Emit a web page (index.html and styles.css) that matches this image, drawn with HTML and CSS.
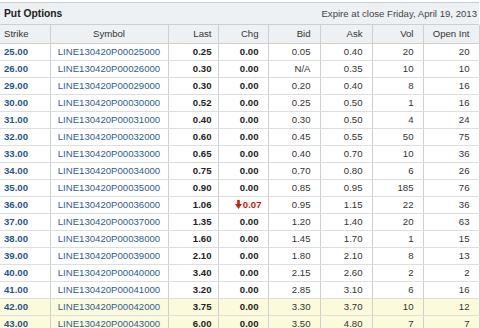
FILE: index.html
```html
<!DOCTYPE html>
<html lang="en">
<head>
    <meta charset="UTF-8">
    <title>Put Options</title>
    <link rel="stylesheet" href="styles.css">
</head>
<body>
    <div class="options">
        <div class="options-head">
            <span class="options-title">Put Options</span>
            <span class="options-expire">Expire at close Friday, April 19, 2013</span>
        </div>
        <table class="chain">
            <colgroup>
                <col class="c-strike"><col class="c-symbol"><col class="c-last"><col class="c-chg">
                <col class="c-bid"><col class="c-ask"><col class="c-vol"><col class="c-oi">
            </colgroup>
            <thead>
                <tr>
                    <th class="left">Strike</th>
                    <th class="center">Symbol</th>
                    <th class="pad-last">Last</th>
                    <th>Chg</th>
                    <th>Bid</th>
                    <th>Ask</th>
                    <th>Vol</th>
                    <th>Open Int</th>
                </tr>
            </thead>
            <tbody id="chain-body"></tbody>
        </table>
    </div>

    <script>
        // strike, last, chg, bid, ask, vol, open int
        const rows = [
            ['25.00', '0.25', '0.00', '0.05', '0.40', '20', '20'],
            ['26.00', '0.30', '0.00', 'N/A', '0.35', '10', '10'],
            ['29.00', '0.30', '0.00', '0.20', '0.40', '8', '16'],
            ['30.00', '0.52', '0.00', '0.25', '0.50', '1', '16'],
            ['31.00', '0.40', '0.00', '0.30', '0.50', '4', '24'],
            ['32.00', '0.60', '0.00', '0.45', '0.55', '50', '75'],
            ['33.00', '0.65', '0.00', '0.40', '0.70', '10', '36'],
            ['34.00', '0.75', '0.00', '0.70', '0.80', '6', '26'],
            ['35.00', '0.90', '0.00', '0.85', '0.95', '185', '76'],
            ['36.00', '1.06', '-0.07', '0.95', '1.15', '22', '36'],
            ['37.00', '1.35', '0.00', '1.20', '1.40', '20', '63'],
            ['38.00', '1.60', '0.00', '1.45', '1.70', '1', '15'],
            ['39.00', '2.10', '0.00', '1.80', '2.10', '8', '13'],
            ['40.00', '3.40', '0.00', '2.15', '2.60', '2', '2'],
            ['41.00', '3.20', '0.00', '2.85', '3.10', '6', '16'],
            ['42.00', '3.75', '0.00', '3.30', '3.70', '10', '12'],
            ['43.00', '6.00', '0.00', '3.50', '4.80', '7', '7']
        ];

        // strikes at or above this are in the money
        const lastPrice = 41.5;

        const downArrow = '<svg class="arrow" width="7" height="9" viewBox="0 0 7 9">' +
            '<rect x="2.2" y="0" width="2.6" height="5" fill="#cc2200"/>' +
            '<polygon points="0,4 7,4 3.5,9" fill="#cc2200"/></svg>';

        function symbolFor(strike) {
            const k = String(Math.round(parseFloat(strike) * 1000)).padStart(8, '0');
            return 'LINE130420P' + k;
        }

        function chgCell(chg) {
            if (chg.startsWith('-')) {
                return `<td class="chg down">${downArrow}${chg.slice(1)}</td>`;
            }
            return `<td class="chg">${chg}</td>`;
        }

        const body = document.getElementById('chain-body');
        rows.forEach(r => {
            const tr = document.createElement('tr');
            if (parseFloat(r[0]) > lastPrice) tr.className = 'itm';
            tr.innerHTML = `
                <td class="left strike"><a href="#">${r[0]}</a></td>
                <td class="center"><a href="#">${symbolFor(r[0])}</a></td>
                <td class="last pad-last">${r[1]}</td>
                ${chgCell(r[2])}
                <td>${r[3]}</td>
                <td>${r[4]}</td>
                <td>${r[5]}</td>
                <td>${r[6]}</td>
            `;
            body.appendChild(tr);
        });
    </script>
</body>
</html>
```

FILE: styles.css
```css
:root {
    --head-bg: #eef1f4;
    --line: #cfcfcf;
    --row-line: #dedede;
    --link: #2c5d99;
    --strike: #1f5594;
    --text: #333333;
    --itm-bg: #fbfbdc;
    --down: #cc2200;
}

* {
    margin: 0;
    padding: 0;
    box-sizing: border-box;
}

body {
    background: #ffffff;
    color: var(--text);
    font-family: "Liberation Sans", Arial, sans-serif;
    font-size: 9.6px;
    padding-top: 2px;
}

.options {
    width: 479px;
}

.options-head {
    display: flex;
    justify-content: space-between;
    align-items: center;
    height: 23px;
    padding: 0 2px 0 4px;
    background: var(--head-bg);
    border-top: 1px solid #c8cdd2;
    border-bottom: 1px solid var(--line);
}

.options-title {
    font-weight: bold;
    font-size: 10.3px;
    color: #222;
}

.options-expire {
    color: #444;
}

.chain {
    width: 479px;
    border-collapse: collapse;
    table-layout: fixed;
}

.c-strike { width: 50px; }
.c-symbol { width: 118px; }
.c-last { width: 50px; }
.c-chg { width: 50px; }
.c-bid { width: 52px; }
.c-ask { width: 52px; }
.c-vol { width: 51px; }
.c-oi { width: 56px; }

th, td {
    height: 17px;
    padding: 0 9px 0 4px;
    text-align: right;
    white-space: nowrap;
    border-left: 1px solid var(--line);
    border-right: 1px solid var(--line);
    border-bottom: 1px solid var(--row-line);
}

th:first-child, td:first-child {
    border-left: none;
}

th {
    height: 18px;
    font-weight: normal;
    color: #333;
    background: var(--head-bg);
    border-bottom: 1px solid var(--line);
}

.left { text-align: left; }
.center { text-align: center; padding: 0; }
.pad-last { padding-right: 6px; }

a {
    color: var(--link);
    text-decoration: none;
}

.strike a {
    color: var(--strike);
    font-weight: bold;
}

.last, .chg {
    font-weight: bold;
    color: #222;
}

.chg.down {
    color: var(--down);
    padding-right: 6px;
}

.arrow {
    vertical-align: -1px;
    margin-right: 1px;
}

.itm td {
    background: var(--itm-bg);
}
```
